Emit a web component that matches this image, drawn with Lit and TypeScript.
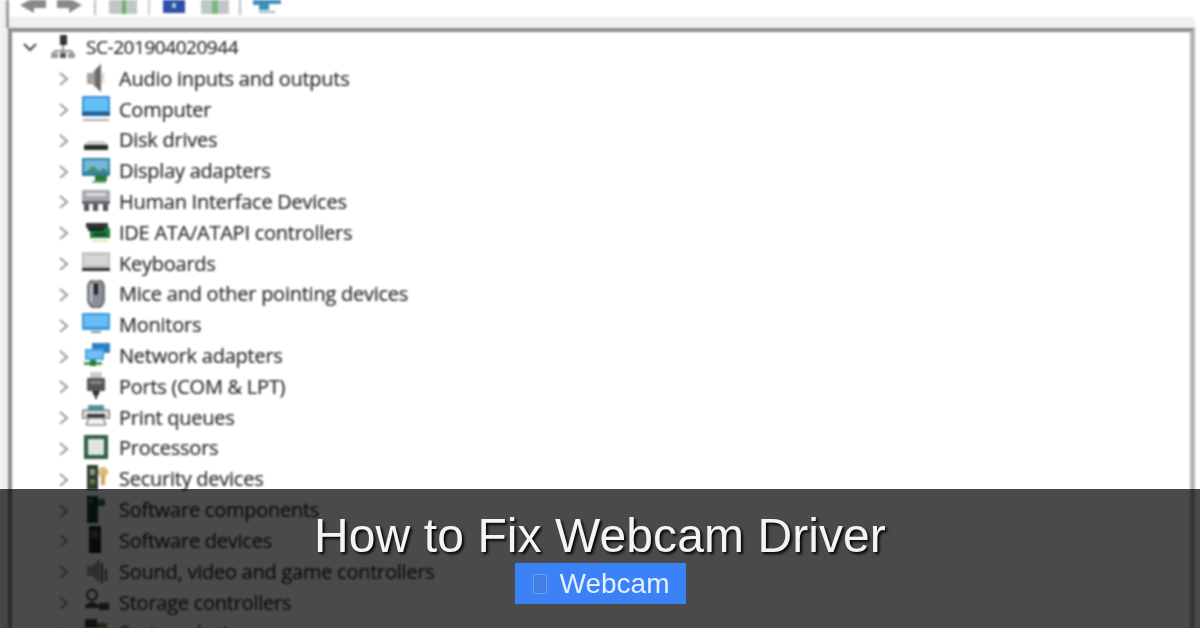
import { LitElement, html, css, svg } from "lit";
import { customElement } from "lit/decorators.js";

const icons: Record<string, any> = {
  root: svg`<rect x="9" y="0" width="7" height="10" fill="#333"/><path d="M12 10v5M3 16h18M3 16v3M21 16v3M12 15v4" stroke="#777" stroke-width="1.5" fill="none"/><rect x="0" y="18" width="7" height="5" fill="#999"/><rect x="9" y="18" width="6" height="5" fill="#555"/><rect x="17" y="18" width="7" height="5" fill="#999"/>`,
  audio: svg`<path d="M5 9h5l9-9v28l-9-8H5z" fill="#a2a2a2"/><path d="M13 6l6-6v28l-6-6z" fill="#6a6a6a"/><path d="M21 9v10" stroke="#ccc" stroke-width="2"/>`,
  computer: svg`<rect x="0" y="1" width="28" height="20" rx="1" fill="#3a8fd0"/><rect x="2" y="3" width="24" height="13" fill="#62c0f5"/><rect x="0" y="17" width="28" height="4" fill="#1f5f90"/><rect x="1" y="24" width="26" height="2" fill="#aab"/>`,
  disk: svg`<path d="M6 15h16l4 4H2z" fill="#ccc"/><rect x="2" y="19" width="24" height="5" fill="#2a2a2a"/>`,
  display: svg`<rect x="0" y="1" width="28" height="18" fill="#2f7fa8"/><rect x="2" y="3" width="24" height="12" fill="#6fb8d8"/><path d="M4 15l7-6 6 5 5-3 4 4z" fill="#4d8a6a"/><rect x="13" y="18" width="12" height="6" fill="#2d7a3a"/><rect x="10" y="24" width="14" height="2" fill="#7a7"/>`,
  hid: svg`<rect x="0" y="3" width="28" height="11" fill="#a5aab0"/><path d="M0 14h28v3H0z" fill="#666"/><path d="M2 24v-7h5v7M11 24v-7h5v7M21 24v-7h5v7" fill="#555"/><path d="M4 6h20v3H4z" fill="#ddd"/>`,
  ide: svg`<rect x="4" y="5" width="22" height="5" fill="#333"/><rect x="8" y="10" width="20" height="10" fill="#1f7a3a"/><rect x="6" y="10" width="16" height="3" fill="#222"/><rect x="12" y="15" width="12" height="3" fill="#0f4f22"/><rect x="10" y="22" width="16" height="2" fill="#e8e2a8"/>`,
  keyboard: svg`<rect x="0" y="4" width="28" height="15" fill="#c8c8c8" stroke="#aaa"/><path d="M3 8h22M3 11h22M3 14h22" stroke="#e6e6e6" stroke-width="1.5"/><rect x="0" y="19" width="28" height="3" fill="#333"/>`,
  mouse: svg`<rect x="6" y="-1" width="16" height="29" rx="8" fill="#8a9096" stroke="#555" stroke-width="1.5"/><rect x="12" y="3" width="4" height="12" rx="2" fill="#223"/><path d="M9 4v18" stroke="#c5cad0" stroke-width="2"/>`,
  monitor: svg`<rect x="0" y="2" width="28" height="17" rx="1" fill="#3a94d8"/><rect x="2" y="4" width="24" height="12" fill="#68bdf5"/><rect x="9" y="20" width="10" height="2" fill="#889"/>`,
  network: svg`<path d="M10 1h18v10H10z" fill="#2f7fc0"/><path d="M3 7h19v11H3z" fill="#4ca6e8"/><rect x="5" y="9" width="15" height="7" fill="#70c0f5"/><rect x="2" y="20" width="18" height="3" fill="#3fa055"/><rect x="8" y="18" width="6" height="6" fill="#2d7a3a"/>`,
  ports: svg`<rect x="8" y="0" width="12" height="6" fill="#ccc"/><rect x="5" y="6" width="18" height="13" rx="1" fill="#555"/><rect x="8" y="9" width="12" height="3" fill="#888"/><path d="M10 19h8l-2 5h-4z" fill="#333"/><rect x="13" y="24" width="2" height="3" fill="#333"/>`,
  print: svg`<rect x="6" y="2" width="16" height="5" fill="#4b9a9a"/><path d="M1 7h26l1 8H0z" fill="#ddd" stroke="#444"/><path d="M5 11h18v3H5z" fill="#333"/><path d="M7 15h14l3 7H4z" fill="#f5f5f5" stroke="#555"/>`,
  cpu: svg`<rect x="2" y="1" width="24" height="24" fill="#2f5f40"/><rect x="6" y="5" width="16" height="16" fill="#dfe6e2"/>`,
  security: svg`<rect x="5" y="0" width="11" height="25" fill="#2e3a30"/><rect x="8" y="4" width="5" height="6" fill="#8a9a70"/><rect x="8" y="14" width="5" height="5" fill="#6a7a50"/><circle cx="21" cy="7" r="5" fill="#d8bc78"/><rect x="19" y="10" width="4" height="10" fill="#c8a860"/>`,
  swcomp: svg`<rect x="5" y="0" width="11" height="27" fill="#1a3a38"/><rect x="16" y="3" width="7" height="7" fill="#3a6a50"/><rect x="8" y="3" width="2" height="4" fill="#6a9"/>`,
  swdev: svg`<rect x="7" y="0" width="12" height="27" fill="#222"/><rect x="9" y="4" width="8" height="8" fill="#555"/>`,
  sound: svg`<path d="M5 9h5l8-7v24l-8-7H5z" fill="#a2a2a2"/><path d="M20 6v20M24 12v12" stroke="#555" stroke-width="2"/>`,
  storage: svg`<circle cx="10" cy="7" r="5" fill="none" stroke="#333" stroke-width="2"/><path d="M3 18q7-8 14 0v2H3z" fill="#444"/><rect x="17" y="15" width="10" height="7" fill="#3c4f3c"/>`,
  system: svg`<rect x="3" y="0" width="12" height="24" fill="#2d4a35"/><rect x="15" y="4" width="10" height="12" fill="#6a8a4a"/>`,
};

const rows: [string, string][] = [
  ["audio", "Audio inputs and outputs"],
  ["computer", "Computer"],
  ["disk", "Disk drives"],
  ["display", "Display adapters"],
  ["hid", "Human Interface Devices"],
  ["ide", "IDE ATA/ATAPI controllers"],
  ["keyboard", "Keyboards"],
  ["mouse", "Mice and other pointing devices"],
  ["monitor", "Monitors"],
  ["network", "Network adapters"],
  ["ports", "Ports (COM & LPT)"],
  ["print", "Print queues"],
  ["cpu", "Processors"],
  ["security", "Security devices"],
  ["swcomp", "Software components"],
  ["swdev", "Software devices"],
  ["sound", "Sound, video and game controllers"],
  ["storage", "Storage controllers"],
  ["system", "System devices"],
];

const chevron = (down = false) => html`<svg class=${down ? "chev down" : "chev"} viewBox="0 -1 14 14">
  <path d=${down ? "M1 3l6 6 6-6" : "M3 1l7 6-7 6"} fill="none" stroke=${down ? "#444" : "#999"} stroke-width="2"/>
</svg>`;

@customElement("app-root")
export class AppRoot extends LitElement {
  static styles = css`
    :host { display: block; width: 1200px; height: 628px; position: relative; overflow: hidden; background: #fff; font-family: "Open Sans", sans-serif; }
    .window { height: 628px; display: flex; flex-direction: column; filter: blur(1px); padding-left: 8px; padding-right: 5px; background: linear-gradient(90deg, #f0f0f0 0, #f0f0f0 8px, transparent 8px); }
    .toolbar { height: 17px; display: flex; align-items: flex-start; background: #fff; overflow: hidden; padding-left: 11px; margin-left: -2px; border-left: 3px solid #9a9a9a; }
    .toolbar svg { display: block; height: 15px; flex: none; }
    .band { height: 11px; background: #f0f0f0; margin-left: -2px; border-left: 3px solid #9a9a9a; }
    .frame { flex: 1; min-height: 0; border-top: 4px solid #8c8c8c; border-left: 4px solid #8c8c8c; border-right: 5px solid #b4b4b4; overflow: hidden; background: #fff; }
    .tree { display: grid; grid-auto-rows: 30.82px; }
    .row { display: flex; align-items: center; color: #2c2c2c; font-size: 20px; letter-spacing: -0.25px; -webkit-text-stroke: 0.2px #2c2c2c; white-space: nowrap; }
    .row .chev { width: 14px; height: 14px; margin-left: 45px; flex: none; }
    .row .ico { width: 28px; height: 28px; margin-left: 11px; margin-right: 9px; flex: none; }
    .root .chev { margin-left: 11px; }
    .root .ico { width: 24px; height: 26px; margin-left: 14px; margin-right: 11px; }
    .root { letter-spacing: -0.45px; font-size: 19px; }
    .overlay { position: absolute; left: 0; right: 0; bottom: 0; height: 139px; background: rgba(0, 0, 0, 0.71); display: flex; flex-direction: column; align-items: center; filter: blur(0.7px); }
    .title { margin-top: 20px; font: 48px/54px "Liberation Sans", Arial, sans-serif; letter-spacing: 0.08px; color: #f4f4f4; text-shadow: 2px 2px 3px #000; white-space: nowrap; }
    .badge { height: 41px; width: 171px; box-sizing: border-box; padding-left: 18px; display: flex; align-items: center; gap: 13px; background: #3b82f6; color: #e4eeff; font: 28px "Liberation Sans", Arial, sans-serif; }
    .tofu { width: 12px; height: 18px; border: 1px solid #6f9fe8; background: #3f7fe6; }
  `;

  render() {
    return html`
      <div class="window">
        <div class="toolbar">
          <svg viewBox="0 0 62 15" width="62"><path d="M0 5L10 0h16v8H14v5z" fill="#888" /><path d="M62 5L52 0H37v8h12v5z" fill="#888" /></svg>
          <svg viewBox="0 0 2 15" width="2" style="margin-left:12px"><rect width="2" height="15" fill="#bbb"/></svg>
          <svg viewBox="0 0 28 15" width="28" style="margin-left:13px"><rect width="28" height="14" fill="#bfc8c4"/><rect x="13" width="4" height="14" fill="#6fae6f"/></svg>
          <svg viewBox="0 0 2 15" width="2" style="margin-left:11px"><rect width="2" height="15" fill="#ccc"/></svg>
          <svg viewBox="0 0 22 15" width="22" style="margin-left:13px"><rect width="22" height="13" fill="#2c4fa8"/><rect x="9" y="3" width="4" height="5" fill="#9cc"/></svg>
          <svg viewBox="0 0 28 15" width="28" style="margin-left:16px"><rect width="28" height="14" fill="#bfc8c4"/><rect x="11" width="6" height="14" fill="#7fb87f"/></svg>
          <svg viewBox="0 0 2 15" width="2" style="margin-left:10px"><rect width="2" height="15" fill="#bbb"/></svg>
          <svg viewBox="0 0 28 15" width="28" style="margin-left:12px"><path d="M0 0h28v4H16v6H6V5H0z" fill="#3f8fb8"/><rect x="6" y="11" width="16" height="2" fill="#9bb"/></svg>
        </div>
        <div class="band"></div>
        <div class="frame">
          <div class="tree">
            <div class="row root">${chevron(true)}<svg class="ico" viewBox="0 0 24 24">${icons.root}</svg>SC-201904020944</div>
            ${rows.map(([i, t]) => html`<div class="row">${chevron()}<svg class="ico" viewBox="0 0 28 28">${icons[i]}</svg>${t}</div>`)}
          </div>
        </div>
      </div>
      <div class="overlay">
        <div class="title">How to Fix Webcam Driver</div>
        <div class="badge"><span class="tofu"></span>Webcam</div>
      </div>
    `;
  }
}
